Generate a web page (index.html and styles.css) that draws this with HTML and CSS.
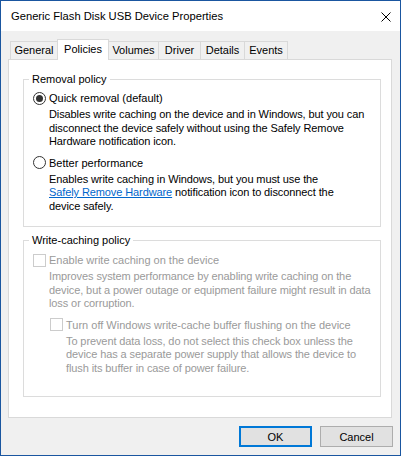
FILE: index.html
```html
<!DOCTYPE html>
<html>
<head>
<meta charset="utf-8">
<link rel="stylesheet" href="styles.css">
</head>
<body>
<div class="window">
  <div class="titlebar">
    <span class="title">Generic Flash Disk USB Device Properties</span>
    <svg class="close" width="10" height="10" viewBox="0 0 10 10"><path d="M0.5 0.5L9.5 9.5M9.5 0.5L0.5 9.5" stroke="#000" stroke-width="1" fill="none"/></svg>
  </div>
  <div class="content">
    <div class="tabs">
      <div class="tab t-general">General</div>
      <div class="tab tab-active t-policies">Policies</div>
      <div class="tab t-volumes">Volumes</div>
      <div class="tab t-driver">Driver</div>
      <div class="tab t-details">Details</div>
      <div class="tab t-events">Events</div>
    </div>
    <div class="panel">
      <fieldset class="group g-removal">
        <legend>Removal policy</legend>
        <div class="option opt-first">
          <span class="radio checked"></span><span class="label">Quick removal (default)</span>
        </div>
        <div class="desc">Disables write caching on the device and in Windows, but you can<br>disconnect the device safely without using the Safely Remove<br>Hardware notification icon.</div>
        <div class="option opt-next">
          <span class="radio"></span><span class="label">Better performance</span>
        </div>
        <div class="desc">Enables write caching in Windows, but you must use the<br><a class="link" href="#">Safely Remove Hardware</a> notification icon to disconnect the<br>device safely.</div>
      </fieldset>
      <fieldset class="group g-cache">
        <legend>Write-caching policy</legend>
        <div class="option opt-first2 disabled">
          <span class="check"></span><span class="label">Enable write caching on the device</span>
        </div>
        <div class="desc disabled">Improves system performance by enabling write caching on the<br>device, but a power outage or equipment failure might result in data<br>loss or corruption.</div>
        <div class="option opt-next opt-sub disabled">
          <span class="check"></span><span class="label">Turn off Windows write-cache buffer flushing on the device</span>
        </div>
        <div class="desc desc-sub disabled">To prevent data loss, do not select this check box unless the<br>device has a separate power supply that allows the device to<br>flush its buffer in case of power failure.</div>
      </fieldset>
    </div>
    <div class="buttons">
      <button class="btn btn-default">OK</button>
      <button class="btn">Cancel</button>
    </div>
  </div>
</div>
</body>
</html>
```
FILE: styles.css
```css
* { box-sizing: border-box; }
html, body { margin: 0; padding: 0; background: #ffffff; }
body {
  font-family: "Liberation Sans", Arial, sans-serif;
  font-size: 11px;
  color: #000;
}
.window {
  width: 401px;
  height: 456px;
  border: 1px solid #1a56a0;
  display: flex;
  flex-direction: column;
  background: #f0f0f0;
}
.titlebar {
  height: 30px;
  background: #fff;
  display: flex;
  align-items: center;
  justify-content: space-between;
  padding: 0 9px 0 10px;
}
.title { font-size: 11.2px; line-height: 14px; }
.close { display: block; margin-top: 1px; }
.content {
  flex: 1;
  display: flex;
  flex-direction: column;
  padding: 8px 8px 8px 7px;
}
.tabs {
  height: 20px;
  display: flex;
  align-items: flex-end;
  padding-left: 2px;
}
.tab {
  height: 18px;
  border: 1px solid #d9d9d9;
  border-bottom: 0;
  margin-left: -1px;
  background: #f0f0f0;
  text-align: center;
  line-height: 17px;
}
.t-general { margin-left: 0; width: 48px; }
.t-policies { width: 52px; }
.t-volumes { width: 51px; }
.t-driver { width: 43px; }
.t-details { width: 45px; }
.t-events { width: 44px; }
.tab-active {
  height: 21px;
  margin-bottom: -1px;
  background: #fff;
  position: relative;
  z-index: 1;
  line-height: 18px;
}
.panel {
  flex: 1;
  background: #fff;
  border: 1px solid #d9d9d9;
  padding: 12px 10px 0 14px;
}
.group {
  margin: 0;
  padding: 0 0 13px 0;
  border: 1px solid #dcdcdc;
  min-width: 0;
}
.g-cache { margin-top: 6px; padding-bottom: 21px; }
.group legend {
  margin-left: 5px;
  padding: 0 3px;
  line-height: 15px;
  height: 15px;
}
.option {
  display: flex;
  align-items: center;
  height: 14px;
  line-height: 14px;
  margin-left: 9px;
  white-space: nowrap;
}
.opt-first { margin-top: 4px; }
.opt-first2 { margin-top: 5px; }
.opt-next { margin-top: 7px; }
.opt-sub { margin-left: 26px; }
.label { margin-left: 3px; }
.radio {
  width: 13px;
  height: 13px;
  border: 1px solid #333;
  border-radius: 50%;
  background: #fff;
  display: flex;
  align-items: center;
  justify-content: center;
  flex: none;
}
.radio.checked::after {
  content: "";
  width: 7px;
  height: 7px;
  border-radius: 50%;
  background: #333;
}
.check {
  width: 13px;
  height: 13px;
  border: 1px solid #cccccc;
  background: #fff;
  flex: none;
}
.desc {
  margin: 3px 0 0 25px;
  line-height: 13.5px;
  white-space: nowrap;
  letter-spacing: -0.1px;
}
.desc-sub { margin-left: 42px; }
.disabled { color: #9a9a9a; }
.link { color: #0066cc; text-decoration: underline; }
.buttons {
  display: flex;
  justify-content: flex-end;
  gap: 8px;
  margin: 8px -1px 0 0;
}
.btn {
  width: 73px;
  height: 21px;
  background: #e1e1e1;
  border: 1px solid #adadad;
  font-family: inherit;
  font-size: 11px;
  color: #000;
  padding: 0;
  margin: 0;
}
.btn-default { border: 2px solid #0078d7; }
```
